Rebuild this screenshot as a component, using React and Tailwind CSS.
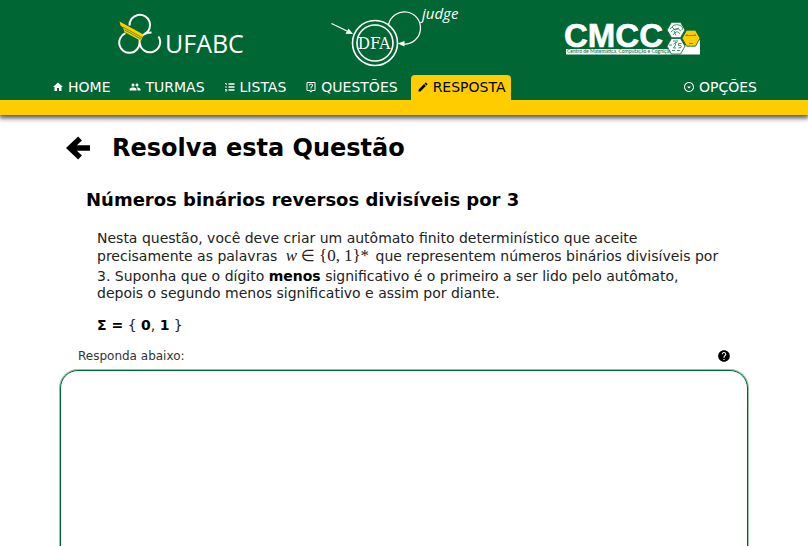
import {
  MdHome,
  MdPeople,
  MdOutlineLiveHelp,
  MdModeEdit,
  MdOutlineArrowDropDownCircle,
  MdHelp,
} from "react-icons/md";

function UfabcLogo() {
  return (
    <svg viewBox="118 12 127 52" className="h-[52px] w-[127px]" role="img" aria-label="UFABC">
      <g fill="none" stroke="#fff" strokeWidth="2">
        <path d="M129.500 25.500A10.300 10.300 0 1 1 144.500 34.200" />
        <path d="M141 37Q144.500 32.500 151.500 32.500" />
        <path d="M125.500 33.200A10.200 10.200 0 1 0 139.600 42.800V38" />
        <path d="M139.800 42.800A10.200 10.200 0 1 0 158.500 36.500" />
      </g>
      <path d="M119.500 21.500L143.500 34.500L141 41L124.500 32L123 27.500L120.500 25.500Z" fill="#fc0" />
      <path d="M123 27L142 37.500M124.500 29.800L141 39" stroke="#063" strokeWidth="0.6" fill="none" />
      <text x="165" y="53" fill="#fff" className="font-['Open_Sans',sans-serif] text-[25px]">
        UFABC
      </text>
    </svg>
  );
}

function DfaLogo() {
  return (
    <svg viewBox="331 5 146 66" className="h-[66px] w-[146px] overflow-visible" role="img" aria-label="DFA judge">
      <g fill="none" stroke="#fff">
        <circle cx="374" cy="43" r="22.500" strokeWidth="1.600" />
        <circle cx="374" cy="43" r="18" strokeWidth="1.600" />
        <path d="M330.500 23.500L346 31" strokeWidth="1.300" />
        <path d="M387.500 24.500A16.200 16.200 0 1 1 403 44.200" strokeWidth="1.200" />
      </g>
      <path d="M352 34L344.500 33.800L347.500 28.500ZM396.500 43.500L403.500 41V46.500Z" fill="#fff" />
      <text x="373" y="49" textAnchor="middle" fill="#fff" className="font-['DejaVu_Serif_Condensed','Liberation_Serif',serif] text-[17px]">
        DFA
      </text>
      <text x="421" y="19" fill="#fff" className="font-['Open_Sans',sans-serif] text-[15px] italic">
        judge
      </text>
    </svg>
  );
}

function CmccLogo() {
  return (
    <svg viewBox="564 19 137 38" className="h-[38px] w-[137px] overflow-visible" role="img" aria-label="CMCC">
      <path d="M566 49H675L700 40V54.500H566Z" fill="#fff" />
      <text x="564" y="47" fill="#fff" stroke="#fff" strokeWidth="0.6" className="font-['Liberation_Sans',Arial,sans-serif] text-[33px] font-bold">
        CMCC
      </text>
      <text x="567" y="53.300" fill="#063" className="font-['Lato',sans-serif] text-[5px]">
        Centro de Matemática, Computação e Cognição
      </text>
      <g stroke="#063" strokeWidth="0.8">
        <path d="M667 30L671.500 22.300H680.500L685 30L680.500 37.700H671.500Z" fill="#fff" />
        <path d="M667 46.200L671.500 38.500H680.500L685 46.200L680.500 54H671.500Z" fill="#fff" />
        <path d="M682 38.200L686.500 30.200H695.500L700 38.200L695.500 46.200H686.500Z" fill="#fc0" />
      </g>
      <g fill="none" stroke="#298a5c" strokeWidth="0.9">
        <path d="M670 29Q674 23.500 679 25T682 30M671 32Q676 26 681 31M673 35Q677 29 680 34M672 27L675 30L679 28M676 35.500L674 31" />
        <path d="M673 41H678M675 42.500H677M669 45H672M673.500 44Q676 42 675.500 45L673.500 48H676M681.500 43.500H678.500V45.500Q682 45 681 47.500L678.500 48M672 50.500H675M677 50.500H680" />
      </g>
      <path d="M685.500 35.500H696M687 34V35M695 34V35M689 43.500H693" stroke="#7a6a00" strokeWidth="0.8" />
    </svg>
  );
}

function ListIcon({ className }) {
  return (
    <svg viewBox="0 0 12 12" className={className} aria-hidden="true">
      <path d="M4.500 3H10.500M4.500 6H10.500M4.500 9H10.500" stroke="currentColor" strokeWidth="1.300" />
      <path d="M1 2.500H2.300V4M1 6H3M1 8.500H2.700V10H1" fill="none" stroke="currentColor" strokeWidth="0.9" />
    </svg>
  );
}

const links = [
  { label: "HOME", Icon: MdHome },
  { label: "TURMAS", Icon: MdPeople },
  { label: "LISTAS", Icon: ListIcon },
  { label: "QUESTÕES", Icon: MdOutlineLiveHelp },
  { label: "RESPOSTA", Icon: MdModeEdit, active: true },
];

function NavLink({ label, Icon, active }) {
  return (
    <a
      href="#"
      aria-current={active ? "page" : undefined}
      className={
        active
          ? "flex h-[25px] items-center gap-1 rounded-t bg-[#ffcc00] px-1.5 pb-px text-black"
          : "flex h-[25px] items-center gap-1 px-1.5 pb-px text-white"
      }
    >
      <Icon className="size-3" />
      {label}
    </a>
  );
}

function Formula() {
  return (
    <span className="inline-block pb-1 font-['Liberation_Serif',serif] text-[17px] leading-[13px] whitespace-nowrap">
      <i className="mr-1 ml-1">w</i>
      <span className="mr-1 font-['DejaVu_Sans',sans-serif] text-base leading-none">∈</span>
      {"{0,"}
      <span className="ml-1">{"1}"}</span>
      <span className="mr-0.5 leading-none">*</span>
    </span>
  );
}

export default function App() {
  return (
    <div className="flex h-screen flex-col overflow-hidden bg-white font-['DejaVu_Sans',Verdana,sans-serif] text-black">
      <header className="shrink-0 border-b-[15px] border-[#ffcc00] bg-[#006633] shadow-[0_2px_5px_1px_rgba(0,0,0,0.7)]">
        <div className="flex h-[75px] items-center justify-between pr-[107px] pl-[118px]">
          <UfabcLogo />
          <DfaLogo />
          <CmccLogo />
        </div>
        <nav className="flex justify-between pr-[45px] pl-[46px] text-sm">
          <div className="flex gap-[7px]">
            {links.map((link) => (
              <NavLink key={link.label} {...link} />
            ))}
          </div>
          <NavLink label="OPÇÕES" Icon={MdOutlineArrowDropDownCircle} />
        </nav>
      </header>

      <main className="px-[60px] pt-[18px]">
        <div className="flex items-center gap-[22px] pl-1.5">
          <a href="#" aria-label="Voltar">
            <svg viewBox="0 0 24 24" className="size-6">
              <path d="M14 2.500L4 12L14 21.500M4 12H24" fill="none" stroke="#000" strokeWidth="5.500" />
            </svg>
          </a>
          <h1 className="text-2xl leading-[30px] font-bold">Resolva esta Questão</h1>
        </div>
        <h2 className="mt-[25px] pl-[26px] text-lg leading-6 font-bold">Números binários reversos divisíveis por 3</h2>
        <div className="mt-[18px] pl-[37px] text-sm leading-[17px] text-[#222]">
          <p>
            Nesta questão, você deve criar um autômato finito determinístico que aceite
            <br />
            precisamente as palavras <Formula /> que representem números binários divisíveis por
            <br />
            3. Suponha que o dígito <b className="text-black">menos</b> significativo é o primeiro a ser lido pelo
            autômato,
            <br />
            depois o segundo menos significativo e assim por diante.
          </p>
          <p className="mt-[15px]">
            <b className="text-black">Σ =</b> {"{"} <b className="text-black">0</b>, <b className="text-black">1</b>{" "}
            {"}"}
          </p>
        </div>
        <div className="mt-3.5 flex items-center justify-between px-[17px] pl-[18px] text-xs leading-4 text-[#333]">
          <label htmlFor="resposta">Responda abaixo:</label>
          <button type="button" aria-label="Ajuda" className="text-black">
            <MdHelp className="size-3.5" />
          </button>
        </div>
        <textarea
          id="resposta"
          className="mt-1.5 block h-[500px] w-full resize-none rounded-[18px] border border-[#006633] bg-white p-4 shadow-[0_0_0_1px_rgba(0,102,51,0.4)] outline-none"
        />
      </main>
    </div>
  );
}
